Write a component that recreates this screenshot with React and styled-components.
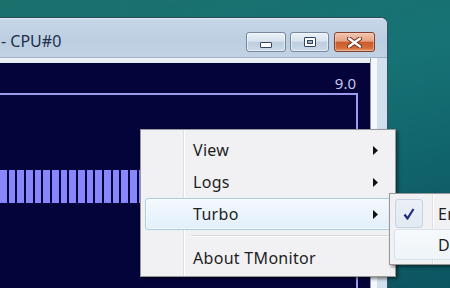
import React from 'react';
import styled, { createGlobalStyle, css } from 'styled-components';

const GlobalStyle = createGlobalStyle`
  html, body {
    margin: 0;
    padding: 0;
  }
  body {
    width: 450px;
    height: 288px;
    overflow: hidden;
    font-family: "Noto Sans", "Open Sans", sans-serif;
  }
`;

const Desktop = styled.div`
  position: relative;
  width: 450px;
  height: 288px;
  box-sizing: border-box;
  padding-top: 17px;
  overflow: hidden;
  background: linear-gradient(165deg, #1b706c 0%, #167275 40%, #0f5f68 75%, #0b5561 100%);
`;

const Window = styled.div`
  width: 388px;
  height: 271px;
  box-sizing: border-box;
  display: flex;
  flex-direction: column;
  border-top: 1px solid #2d4d5a;
  border-right: 1px solid #35515f;
  border-top-right-radius: 7px;
  overflow: hidden;
  background: #c2d3e5;
`;

const TitleBar = styled.div`
  height: 40px;
  box-sizing: border-box;
  display: flex;
  align-items: flex-start;
  padding: 13px 12px 0 0;
  background: linear-gradient(#e2ecf6 0, #c6d6e8 2px, #bccee1 60%, #c1d2e4 100%);
  border-bottom: 1px solid #9db0c5;
`;

const Title = styled.div`
  font-size: 16px;
  line-height: 21px;
  color: #1d304c;
  margin-left: 1px;
  white-space: nowrap;
`;

const Captions = styled.div`
  margin-left: auto;
  margin-top: 1px;
  display: flex;
  gap: 4px;
`;

const CaptionButton = styled.div`
  width: ${p => p.$w}px;
  height: 20px;
  box-sizing: border-box;
  display: flex;
  align-items: center;
  justify-content: center;
  border-radius: 3px;
  border: 1px solid #7688a1;
  background: linear-gradient(#eaf1f8 0%, #d8e3ee 45%, #bfcedf 52%, #cbd9e8 100%);
  box-shadow: inset 0 0 0 1px rgba(255, 255, 255, 0.5);

  ${p => p.$close && css`
    margin-left: 1px;
    border-color: #80402b;
    background: linear-gradient(#f0c6b2 0%, #e4a384 45%, #cb5a2c 52%, #d26d3a 82%, #e29968 100%);
    box-shadow: inset 0 0 0 1px rgba(255, 220, 200, 0.45);
  `}
`;

const MinGlyph = styled.div`
  width: 12px;
  height: 6px;
  box-sizing: border-box;
  margin-top: 5px;
  border: 1px solid #34465e;
  border-radius: 1px;
  background: #fff;
`;

const MaxGlyph = styled.div`
  width: 12px;
  height: 10px;
  box-sizing: border-box;
  display: flex;
  align-items: center;
  justify-content: center;
  border: 1px solid #34465e;
  border-radius: 1px;
  background: #fff;

  div {
    width: 6px;
    height: 4px;
    box-sizing: border-box;
    border: 1px solid #34465e;
    background: #9fb0c4;
  }
`;

const FrameBody = styled.div`
  flex: 1;
  display: flex;
  min-height: 0;
`;

const ClientColumn = styled.div`
  width: 370px;
  box-sizing: border-box;
  padding-top: 5px;
  display: flex;
  flex-direction: column;
  background: linear-gradient(#ffffff 0, #e6eef6 1px, #dde7f1 100%);
`;

const RightFrame = styled.div`
  flex: 1;
  background: linear-gradient(90deg, #8e9bab 0 1px, #f4f8fb 1px 7px, #d2dfec 7px 100%);
`;

const Client = styled.div`
  flex: 1;
  display: flex;
  flex-direction: column;
  background: #04043a;
`;

const ScaleLabel = styled.div`
  height: 30px;
  box-sizing: border-box;
  padding: 11px 14px 0 0;
  text-align: right;
  font-size: 15px;
  line-height: 18px;
  color: #c6c6f0;
`;

const Graph = styled.div`
  margin-right: 12px;
  border-top: 2px solid #9c9cee;
  border-right: 2px solid #9c9cee;
  ${p => p.$main ? css`
    height: 123px;
    padding-top: 75px;
    box-sizing: content-box;
    border-bottom: 4px solid #e6e6f6;
  ` : css`
    flex: 1;
    margin-top: 31px;
  `}
`;

const Bars = styled.div`
  height: 33px;
  display: flex;
  gap: 2px;
  overflow: hidden;
`;

const Bar = styled.div`
  flex: 0 0 6.67px;
  background: #8787fb;
`;

const Menu = styled.div`
  position: absolute;
  left: ${p => p.$left}px;
  top: ${p => p.$top}px;
  width: ${p => p.$width}px;
  box-sizing: border-box;
  padding: 4px 2px ${p => p.$bottom}px 4px;
  border: 1px solid #979797;
  background:
    linear-gradient(90deg, transparent 42px, #dedee3 42px 43px, #ffffff 43px 44px, transparent 44px),
    #f1f1f4;
  box-shadow: 2px 2px 3px rgba(0, 0, 0, 0.45);
  font-size: 16px;
  letter-spacing: 0.3px;
  color: #1e1e1e;
`;

const Item = styled.div`
  height: ${p => p.$h}px;
  box-sizing: border-box;
  display: flex;
  align-items: center;
  padding-right: 14px;
  border: 1px solid transparent;
  border-radius: 3px;
  white-space: nowrap;

  ${p => p.$active && css`
    border-color: #a8cde4;
    background: linear-gradient(#f3f9fd, #e2effa);
    box-shadow: inset 0 0 0 1px rgba(255, 255, 255, 0.6);
  `}

  ${p => p.$soft && css`
    border-color: #d6e2ed;
    background: linear-gradient(#f7fafc, #eef4f9);
  `}
`;

const Gutter = styled.div`
  flex: 0 0 ${p => p.$w}px;
  align-self: stretch;
  display: flex;
  align-items: center;
`;

const CheckBox = styled.div`
  width: 28px;
  height: 29px;
  box-sizing: border-box;
  display: flex;
  align-items: center;
  justify-content: center;
  border: 1px solid #c5d4e3;
  border-radius: 3px;
  background: linear-gradient(#eaf0f6, #e1e9f2);
`;

const Arrow = styled.svg`
  margin-left: auto;
  flex: none;
`;

const Separator = styled.div`
  height: 12px;
  display: flex;
  align-items: center;
  margin-left: 46px;

  &::before {
    content: "";
    flex: 1;
    height: 1px;
    background: #d7d7d9;
    border-bottom: 1px solid #ffffff;
  }
`;

const SubArrow = () => (
  <Arrow width="5" height="9" viewBox="0 0 5 9">
    <path d="M0 0 L5 4.5 L0 9 Z" fill="#111" />
  </Arrow>
);

const MenuItem = ({ label, sub, active, soft, h = 32, gutter = 47, children }) => (
  <Item $h={h} $active={active} $soft={soft}>
    <Gutter $w={gutter}>{children}</Gutter>
    <span>{label}</span>
    {sub && <SubArrow />}
  </Item>
);

const bars = Array.from({ length: 42 }, (_, i) => i);

const App = () => {
  return (
    <>
      <GlobalStyle />
      <Desktop>
        <Window>
          <TitleBar>
            <Title>- CPU#0</Title>
            <Captions>
              <CaptionButton $w={40}>
                <MinGlyph />
              </CaptionButton>
              <CaptionButton $w={39}>
                <MaxGlyph>
                  <div />
                </MaxGlyph>
              </CaptionButton>
              <CaptionButton $w={41} $close>
                <svg width="15" height="11" viewBox="0 0 15 11">
                  <path d="M2 1.5 L13 9.5 M13 1.5 L2 9.5" stroke="#6e2e1c" strokeWidth="4.4" strokeLinecap="round" />
                  <path d="M2 1.5 L13 9.5 M13 1.5 L2 9.5" stroke="#ffffff" strokeWidth="2.4" strokeLinecap="round" />
                </svg>
              </CaptionButton>
            </Captions>
          </TitleBar>
          <FrameBody>
            <ClientColumn>
              <Client>
                <ScaleLabel>9.0</ScaleLabel>
                <Graph $main>
                  <Bars>
                    {bars.map(i => <Bar key={i} />)}
                  </Bars>
                </Graph>
                <Graph />
              </Client>
            </ClientColumn>
            <RightFrame />
          </FrameBody>
        </Window>

        <Menu $left={140} $top={129} $width={256} $bottom={2}>
          <MenuItem label="View" sub />
          <MenuItem label="Logs" sub />
          <MenuItem label="Turbo" sub active />
          <Separator />
          <MenuItem label="About TMonitor" />
        </Menu>

        <Menu $left={389} $top={193} $width={130} $bottom={4}>
          <MenuItem label="Enable" h={31} gutter={43}>
            <CheckBox>
              <svg width="14" height="14" viewBox="0 0 14 14">
                <path d="M2.5 7.5 L5.5 11.5 L11.5 2" fill="none" stroke="#1f2b80" strokeWidth="2.2" strokeLinejoin="round" />
              </svg>
            </CheckBox>
          </MenuItem>
          <MenuItem label="Disable" h={31} gutter={43} soft />
        </Menu>
      </Desktop>
    </>
  );
};

export default App;
